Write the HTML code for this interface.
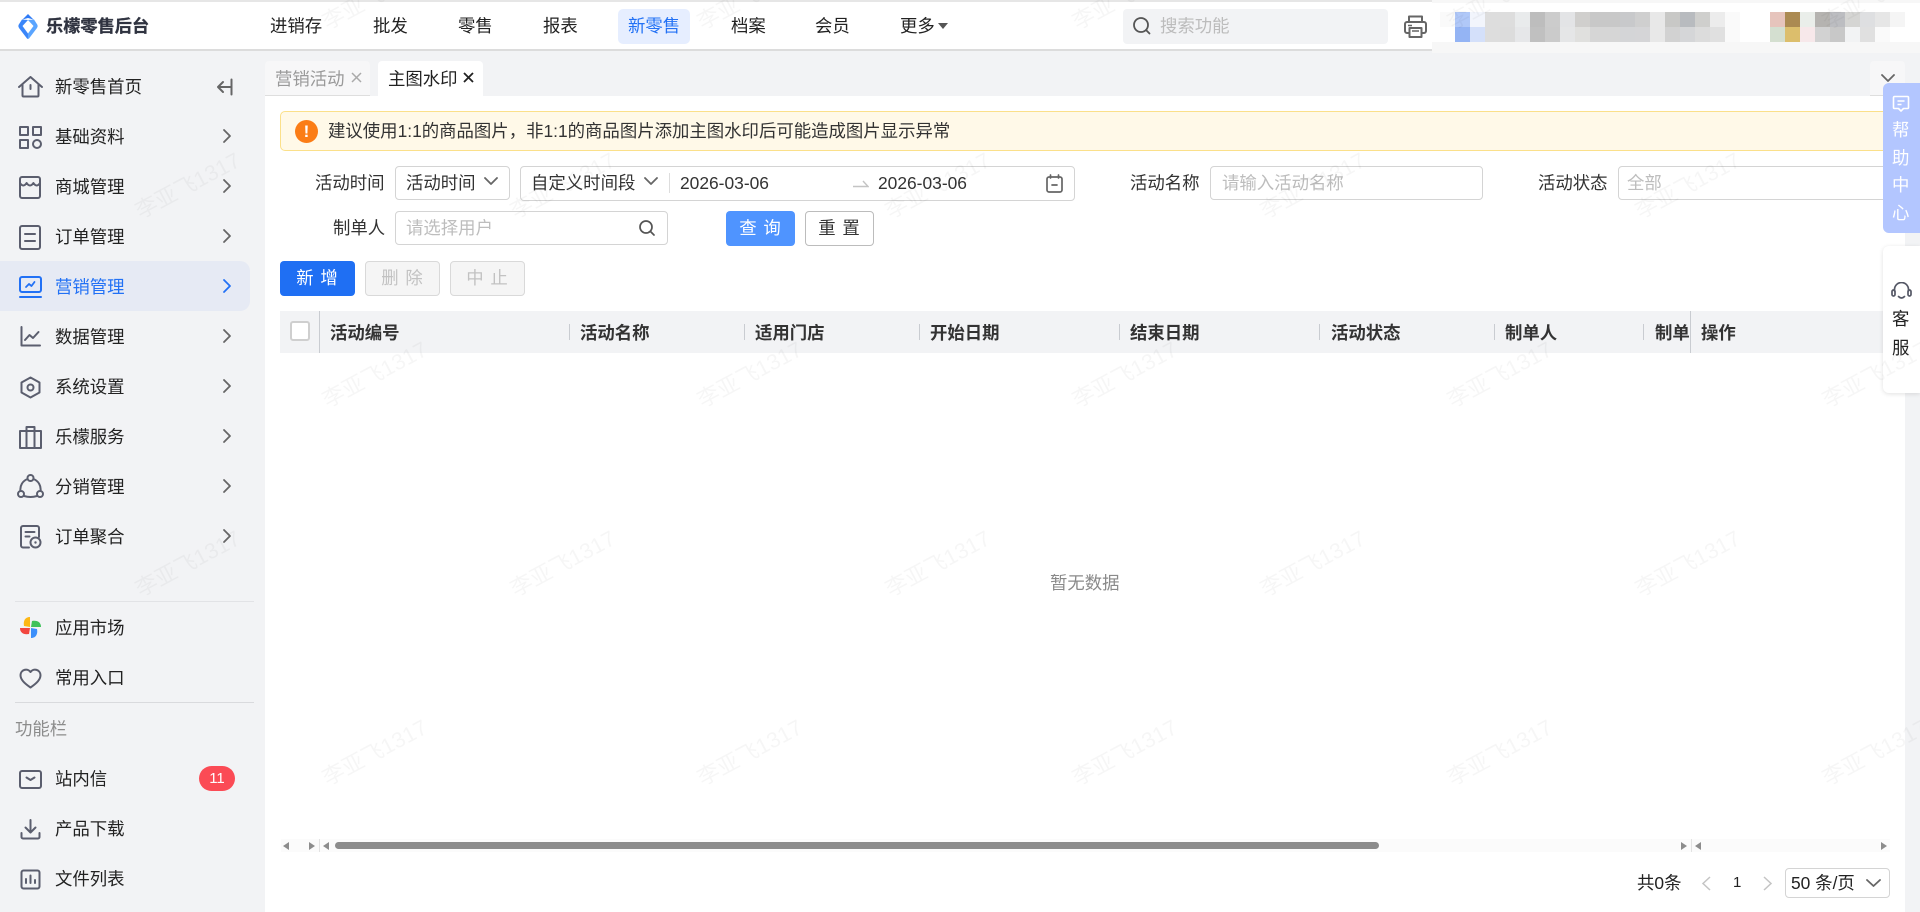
<!DOCTYPE html>
<html lang="zh-CN">
<head>
<meta charset="utf-8">
<title>主图水印</title>
<style>
html,body{margin:0;padding:0}
body{width:1920px;height:912px;position:relative;overflow:hidden;background:#f2f3f5;font-family:"Liberation Sans","Noto Sans CJK SC",sans-serif;font-size:17.4px;color:#222}
div,span,svg{position:absolute;box-sizing:border-box}
.t{line-height:24px;height:24px;white-space:nowrap}
.ph{color:#bdbdbd}
.b{border:1px solid #d4d4d4;border-radius:4px;background:#fff}
.btn{border-radius:4px;text-align:center;line-height:33px;letter-spacing:1px;white-space:nowrap}
.dis{background:#f5f5f5;border:1px solid #d9d9d9;color:#c2c2c2;width:75px;height:35px;top:261px}
.th{font-weight:700;color:#333;top:321px;font-size:17.4px}
.sp{width:1px;height:16px;background:#c9ccd1;top:324px}
.wm{color:rgba(0,0,0,.035);font-size:22px;line-height:30px;white-space:nowrap;transform:translate(-50%,-50%) rotate(-28deg);pointer-events:none}
.ic{fill:none;stroke:#5b5e6e;stroke-width:2;stroke-linecap:round;stroke-linejoin:round}
.ch{fill:none;stroke:#666;stroke-width:1.8;stroke-linecap:round;stroke-linejoin:round}
.px{width:15px;height:15px}
</style>
</head>
<body>

<!-- top bar -->
<div style="left:0;top:0;width:1920px;height:51px;background:#fff;border-top:2px solid #e6e6e6;border-bottom:2px solid #dcdcdc"></div>
<svg style="left:18px;top:13px" width="20" height="27" viewBox="0 0 20 27"><path d="M10 1 L15.500 6.500 L10 5 L4.500 6.500Z" fill="#2f7bf6"/><path d="M4 6.500 L0.500 12 Q0 13.500 1 15 L9 25.500 L10 26 L10 20.500 L4.500 13 L10 7 Z" fill="#3a86f9"/><path d="M16 6.500 L19.500 12 Q20 13.500 19 15 L11 25.500 L10 26 L10 20.500 L15.500 13 L10 7 Z" fill="#5aa5ff"/></svg>
<span class="t" style="left:46px;top:14px;font-weight:700;font-size:17.2px;color:#2f3340;-webkit-text-stroke:.3px #2f3340">乐檬零售后台</span>

<span class="t" style="left:270px;top:14px">进销存</span>
<span class="t" style="left:373px;top:14px">批发</span>
<span class="t" style="left:458px;top:14px">零售</span>
<span class="t" style="left:543px;top:14px">报表</span>
<div style="left:618px;top:9px;width:72px;height:35px;background:#e6eeff;border-radius:5px"></div>
<span class="t" style="left:628px;top:14px;color:#2271f5">新零售</span>
<span class="t" style="left:731px;top:14px">档案</span>
<span class="t" style="left:815px;top:14px">会员</span>
<span class="t" style="left:900px;top:14px">更多</span>
<svg style="left:938px;top:22px" width="11" height="8"><path d="M0 1H10L5 7Z" fill="#555"/></svg>

<div style="left:1123px;top:9px;width:265px;height:35px;background:#f2f3f5;border-radius:4px"></div>
<svg style="left:1132px;top:16px" width="20" height="20" viewBox="0 0 20 20" fill="none" stroke="#555" stroke-width="1.8" stroke-linecap="round"><circle cx="9" cy="9" r="7"/><path d="M14 14l3.500 3.500"/></svg>
<span class="t ph" style="left:1160px;top:14px;color:#bcbcbc">搜索功能</span>
<svg style="left:1403px;top:14px" width="25" height="25" viewBox="0 0 25 25" fill="none" stroke="#666" stroke-width="2" stroke-linejoin="round"><path d="M6 8V2.500h13V8"/><rect x="2" y="8" width="21" height="11" rx="2"/><rect x="6.500" y="14" width="12" height="9" fill="#fff"/><path d="M5 11.500h4M9 17h7" stroke-width="1.500"/></svg>

<!-- blurred account -->
<div style="left:1432px;top:0;width:488px;height:53px;background:#f7f7f7"></div>
<div style="left:1432px;top:3px;width:488px;height:39px;background:#fff"></div>
<div id="pxrow" style="left:0;top:0;width:0;height:0">
<span class="px" style="left:1440px;top:12px;background:#fafafa"></span>
<span class="px" style="left:1455px;top:12px;background:#b0c8f8"></span><span class="px" style="left:1455px;top:27px;background:#94b4f4"></span>
<span class="px" style="left:1470px;top:12px;background:#f2f5fc"></span><span class="px" style="left:1470px;top:27px;background:#d4e0fa"></span>
<span class="px" style="left:1485px;top:12px;background:#ddd"></span><span class="px" style="left:1485px;top:27px;background:#ddd"></span>
<span class="px" style="left:1500px;top:12px;background:#ddd"></span><span class="px" style="left:1500px;top:27px;background:#dcdcdc"></span>
<span class="px" style="left:1515px;top:12px;background:#e9ebec"></span><span class="px" style="left:1515px;top:27px;background:#e6e7e9"></span>
<span class="px" style="left:1530px;top:12px;background:#bdbdbd"></span><span class="px" style="left:1530px;top:27px;background:#c0c0c0"></span>
<span class="px" style="left:1545px;top:12px;background:#ccc"></span><span class="px" style="left:1545px;top:27px;background:#cbcbcb"></span>
<span class="px" style="left:1560px;top:12px;background:#e3e4e6"></span><span class="px" style="left:1560px;top:27px;background:#e5e6e7"></span>
<span class="px" style="left:1575px;top:12px;background:#d0cfcd"></span><span class="px" style="left:1575px;top:27px;background:#e0e0de"></span>
<span class="px" style="left:1590px;top:12px;background:#c8c8c8"></span><span class="px" style="left:1590px;top:27px;background:#d6d6d6"></span>
<span class="px" style="left:1605px;top:12px;background:#c8c8c8"></span><span class="px" style="left:1605px;top:27px;background:#d6d6d6"></span>
<span class="px" style="left:1620px;top:12px;background:#c8c9cb"></span><span class="px" style="left:1620px;top:27px;background:#d4d5d7"></span>
<span class="px" style="left:1635px;top:12px;background:#cfcfcf"></span><span class="px" style="left:1635px;top:27px;background:#d5d5d7"></span>
<span class="px" style="left:1650px;top:12px;background:#e8e8e8"></span><span class="px" style="left:1650px;top:27px;background:#e8e8e8"></span>
<span class="px" style="left:1665px;top:12px;background:#c8c8c6"></span><span class="px" style="left:1665px;top:27px;background:#d2d2d2"></span>
<span class="px" style="left:1680px;top:12px;background:#b8bbbf"></span><span class="px" style="left:1680px;top:27px;background:#d5d6d8"></span>
<span class="px" style="left:1695px;top:12px;background:#cfcfcd"></span><span class="px" style="left:1695px;top:27px;background:#dcdcdc"></span>
<span class="px" style="left:1710px;top:12px;background:#ececec"></span><span class="px" style="left:1710px;top:27px;background:#e0e0e0"></span>
<span class="px" style="left:1725px;top:12px;background:#fafafa"></span><span class="px" style="left:1725px;top:27px;background:#fafafa"></span>
<span class="px" style="left:1770px;top:12px;background:#e6c4bc"></span><span class="px" style="left:1770px;top:27px;background:#d4dfd0"></span>
<span class="px" style="left:1785px;top:12px;background:#ab8a52"></span><span class="px" style="left:1785px;top:27px;background:#dcbe6c"></span>
<span class="px" style="left:1800px;top:12px;background:#eaeeea"></span><span class="px" style="left:1800px;top:27px;background:#f7e8ea"></span>
<span class="px" style="left:1815px;top:12px;background:#b5b3b0"></span><span class="px" style="left:1815px;top:27px;background:#d2d2d2"></span>
<span class="px" style="left:1830px;top:12px;background:#bcbdc1"></span><span class="px" style="left:1830px;top:27px;background:#c8c8c8"></span>
<span class="px" style="left:1845px;top:12px;background:#d5d5d3"></span><span class="px" style="left:1845px;top:27px;background:#f2f3f4"></span>
<span class="px" style="left:1860px;top:12px;background:#dedfe1"></span><span class="px" style="left:1860px;top:27px;background:#e0e0e0"></span>
<span class="px" style="left:1875px;top:12px;background:#e6e6e6"></span><span class="px" style="left:1875px;top:27px;background:#fafafa"></span>
<span class="px" style="left:1890px;top:12px;background:#f5f5f5"></span>
</div>

<!-- sidebar -->
<div style="left:0;top:261px;width:250px;height:50px;background:#e6eaf4;border-radius:0 10px 10px 0"></div>

<svg class="ic" style="left:18px;top:76px" width="25" height="22" viewBox="0 0 25 22"><path d="M1 11 L12.500 1 L24 11M4.500 8.500V19.500a1 1 0 0 0 1 1H19.500a1 1 0 0 0 1-1V8.500M12.500 9v4"/></svg>
<svg class="ic" style="left:19px;top:126px" width="23" height="23" viewBox="0 0 23 23"><rect x="1" y="1" width="8" height="8"/><rect x="14" y="1" width="8" height="8"/><rect x="1" y="14" width="8" height="8"/><circle cx="18" cy="18" r="4"/></svg>
<svg class="ic" style="left:19px;top:176px" width="22" height="23" viewBox="0 0 22 23"><rect x="1" y="1" width="20" height="21" rx="2"/><path d="M1 7 q3.300 5 6.600 0 q3.400 5 6.800 0 q3.300 5 6.600 0"/></svg>
<svg class="ic" style="left:19px;top:225px" width="22" height="25" viewBox="0 0 22 25"><rect x="1" y="1" width="20" height="23" rx="2"/><path d="M6 9h10M6 16h10"/></svg>
<svg style="left:19px;top:275px" width="23" height="24" viewBox="0 0 23 24" fill="none" stroke="#2271f5" stroke-width="2" stroke-linejoin="round" stroke-linecap="round"><rect x="1" y="2" width="21" height="15" rx="2"/><path d="M1 22h21"/><path d="M7 12l3-3 2.500 2 3-4" stroke-width="1.800"/></svg>
<svg class="ic" style="left:20px;top:326px" width="21" height="21" viewBox="0 0 21 21"><path d="M1.500 1V19.500H20M5 14l4.500-5 3.500 3 5.500-6"/></svg>
<svg class="ic" style="left:20px;top:376px" width="21" height="23" viewBox="0 0 21 23"><path d="M10.500 1.500L19.500 6.500V16.500L10.500 21.500L1.500 16.500V6.500Z"/><circle cx="10.500" cy="11.500" r="3"/></svg>
<svg class="ic" style="left:18px;top:425px" width="25" height="24" viewBox="0 0 25 24"><rect x="2" y="6" width="21" height="17"/><path d="M8.500 6V2h8v4M8.500 6v17M16.500 6v17"/></svg>
<svg class="ic" style="left:17px;top:474px" width="27" height="25" viewBox="0 0 27 25"><circle cx="13.500" cy="4" r="3"/><circle cx="4" cy="20" r="3"/><circle cx="23" cy="20" r="3"/><path d="M10.500 5A11 11 0 0 0 3.500 17M16.500 5A11 11 0 0 1 23.500 17M7 22q6.500 2 13 0"/></svg>
<svg class="ic" style="left:20px;top:525px" width="22" height="24" viewBox="0 0 22 24"><path d="M9 22.500H3a2 2 0 0 1-2-2V3a2 2 0 0 1 2-2H17a2 2 0 0 1 2 2V12M5.500 7h9M5.500 11.500h4"/><circle cx="15.500" cy="17.500" r="5"/><circle cx="15.500" cy="17.500" r="1.200" fill="#5b5e6e" stroke="none"/></svg>

<span class="t" style="left:55px;top:75px">新零售首页</span>
<span class="t" style="left:55px;top:125px">基础资料</span>
<span class="t" style="left:55px;top:175px">商城管理</span>
<span class="t" style="left:55px;top:225px">订单管理</span>
<span class="t" style="left:55px;top:275px;color:#2271f5">营销管理</span>
<span class="t" style="left:55px;top:325px">数据管理</span>
<span class="t" style="left:55px;top:375px">系统设置</span>
<span class="t" style="left:55px;top:425px">乐檬服务</span>
<span class="t" style="left:55px;top:475px">分销管理</span>
<span class="t" style="left:55px;top:525px">订单聚合</span>

<svg class="ch" style="left:216px;top:78px" width="17" height="18" viewBox="0 0 17 18"><path d="M15.500 1.500v15M15 9H2M7 4L2 9l5 5" stroke-width="2"/></svg>
<svg class="ch" style="left:222px;top:128px" width="10" height="16" viewBox="0 0 10 16"><path d="M2 2l6 6-6 6"/></svg>
<svg class="ch" style="left:222px;top:178px" width="10" height="16" viewBox="0 0 10 16"><path d="M2 2l6 6-6 6"/></svg>
<svg class="ch" style="left:222px;top:228px" width="10" height="16" viewBox="0 0 10 16"><path d="M2 2l6 6-6 6"/></svg>
<svg class="ch" style="left:222px;top:278px;stroke:#2271f5" width="10" height="16" viewBox="0 0 10 16"><path d="M2 2l6 6-6 6"/></svg>
<svg class="ch" style="left:222px;top:328px" width="10" height="16" viewBox="0 0 10 16"><path d="M2 2l6 6-6 6"/></svg>
<svg class="ch" style="left:222px;top:378px" width="10" height="16" viewBox="0 0 10 16"><path d="M2 2l6 6-6 6"/></svg>
<svg class="ch" style="left:222px;top:428px" width="10" height="16" viewBox="0 0 10 16"><path d="M2 2l6 6-6 6"/></svg>
<svg class="ch" style="left:222px;top:478px" width="10" height="16" viewBox="0 0 10 16"><path d="M2 2l6 6-6 6"/></svg>
<svg class="ch" style="left:222px;top:528px" width="10" height="16" viewBox="0 0 10 16"><path d="M2 2l6 6-6 6"/></svg>

<div style="left:15px;top:601px;width:239px;height:1px;background:#e2e3e6"></div>
<svg style="left:19px;top:616px" width="23" height="23" viewBox="0 0 23 23"><path d="M11 11V1C6 1 4 5 5 10Z" fill="#fdb714"/><path d="M12 11H22C22 6 18 4 13 5Z" fill="#3fc25b"/><path d="M12 12V22C17 22 19 18 18 13Z" fill="#3c8ffa"/><path d="M11 12H1C1 17 5 19 10 18Z" fill="#f2463f"/></svg>
<span class="t" style="left:55px;top:616px">应用市场</span>
<svg class="ic" style="left:19px;top:668px" width="23" height="21" viewBox="0 0 23 21"><path d="M11.500 19.500C5 15 1.500 11.500 1.500 7A5.500 5.500 0 0 1 11.500 4 5.500 5.500 0 0 1 21.500 7C21.500 11.500 18 15 11.500 19.500Z"/></svg>
<span class="t" style="left:55px;top:666px">常用入口</span>
<div style="left:15px;top:702px;width:239px;height:1px;background:#d9dadd"></div>
<span class="t" style="left:15px;top:717px;color:#8c8c8c">功能栏</span>
<svg class="ic" style="left:19px;top:770px" width="23" height="19" viewBox="0 0 23 19"><rect x="1" y="1" width="21" height="17" rx="2"/><path d="M7.500 7.500l4 2.500 4-2.500"/></svg>
<span class="t" style="left:55px;top:767px">站内信</span>
<div style="left:199px;top:766px;width:36px;height:25px;border-radius:13px;background:#fb4b55;color:#fff;text-align:center;line-height:25px;font-size:15px">11</div>
<svg class="ic" style="left:20px;top:819px" width="21" height="21" viewBox="0 0 21 21"><path d="M10.500 1v12M5.500 8.500l5 5 5-5M1.500 14v4a1.500 1.500 0 0 0 1.500 1.500h15a1.500 1.500 0 0 0 1.500-1.500v-4"/></svg>
<span class="t" style="left:55px;top:817px">产品下载</span>
<svg class="ic" style="left:20px;top:869px" width="21" height="21" viewBox="0 0 21 21"><rect x="1.500" y="1.500" width="18" height="18" rx="2"/><path d="M6 14v-4M10.500 14V6.500M15 14v-3"/></svg>
<span class="t" style="left:55px;top:867px">文件列表</span>

<!-- tabs -->
<div style="left:265px;top:61px;width:105px;height:35px;background:#f7f7f8;border-bottom:1px solid #dedede;border-radius:4px 4px 0 0"></div>
<span class="t" style="left:275px;top:67px;color:#9a9a9a">营销活动</span>
<svg style="left:351px;top:72px" width="11" height="11" viewBox="0 0 11 11"><path d="M1 1l9 9M10 1l-9 9" stroke="#aaa" stroke-width="1.500"/></svg>
<div style="left:378px;top:61px;width:105px;height:36px;background:#fff;border-radius:4px 4px 0 0"></div>
<span class="t" style="left:388px;top:67px;color:#222">主图水印</span>
<svg style="left:463px;top:72px" width="11" height="11" viewBox="0 0 11 11"><path d="M1 1l9 9M10 1l-9 9" stroke="#222" stroke-width="1.800"/></svg>
<div style="left:1870px;top:61px;width:35px;height:35px;background:#f7f7f8;border-bottom:1px solid #dedede;border-radius:4px 4px 0 0"></div>
<svg class="ch" style="left:1881px;top:74px" width="14" height="9" viewBox="0 0 14 9"><path d="M1 1l6 6 6-6"/></svg>

<!-- content -->
<div style="left:265px;top:96px;width:1640px;height:816px;background:#fff"></div>

<!-- alert -->
<div style="left:280px;top:111px;width:1610px;height:40px;background:#fff9e8;border:1px solid #fbe08a;border-radius:5px"></div>
<div style="left:295px;top:120px;width:23px;height:23px;background:#fb7d16;border-radius:50%;color:#fff;text-align:center;line-height:23px;font-weight:700;font-size:17px">!</div>
<span class="t" style="left:328px;top:119px;color:#333">建议使用1:1的商品图片，非1:1的商品图片添加主图水印后可能造成图片显示异常</span>

<!-- filters row 1 -->
<span class="t" style="left:315px;top:171px;color:#333">活动时间</span>
<div class="b" style="left:395px;top:166px;width:115px;height:34px"></div>
<span class="t" style="left:406px;top:171px;color:#333">活动时间</span>
<svg class="ch" style="left:484px;top:177px" width="14" height="9" viewBox="0 0 14 9"><path d="M1 1l6 6 6-6"/></svg>

<div class="b" style="left:520px;top:166px;width:555px;height:35px"></div>
<span class="t" style="left:531px;top:171px;color:#333">自定义时间段</span>
<svg class="ch" style="left:644px;top:177px" width="14" height="9" viewBox="0 0 14 9"><path d="M1 1l6 6 6-6"/></svg>
<div style="left:669px;top:173px;width:1px;height:20px;background:#ddd"></div>
<span class="t" style="left:680px;top:171px;color:#333">2026-03-06</span>
<svg style="left:853px;top:178px" width="16" height="10" viewBox="0 0 16 10" fill="none" stroke="#c4c4c4" stroke-width="1.400"><path d="M0 8.500H15L10 3"/></svg>
<span class="t" style="left:878px;top:171px;color:#333">2026-03-06</span>
<svg style="left:1046px;top:174px" width="17" height="19" viewBox="0 0 17 19" fill="none" stroke="#666" stroke-width="1.700" stroke-linecap="round"><rect x="1" y="3" width="15" height="15" rx="2"/><path d="M4.500 1v3M12.500 1v3M6 11h5"/></svg>

<span class="t" style="left:1130px;top:171px;color:#333">活动名称</span>
<div class="b" style="left:1210px;top:166px;width:273px;height:34px"></div>
<span class="t ph" style="left:1222px;top:171px">请输入活动名称</span>
<span class="t" style="left:1538px;top:171px;color:#333">活动状态</span>
<div class="b" style="left:1618px;top:166px;width:280px;height:34px"></div>
<span class="t ph" style="left:1627px;top:171px">全部</span>

<!-- filters row 2 -->
<span class="t" style="left:333px;top:216px;color:#333">制单人</span>
<div class="b" style="left:395px;top:211px;width:273px;height:34px"></div>
<span class="t ph" style="left:406px;top:216px">请选择用户</span>
<svg style="left:638px;top:219px" width="18" height="18" viewBox="0 0 18 18" fill="none" stroke="#555" stroke-width="1.700" stroke-linecap="round"><circle cx="8" cy="8" r="6"/><path d="M12.500 12.500l3.500 3.500"/></svg>
<div class="btn" style="left:726px;top:211px;width:69px;height:35px;background:#4f94ff;color:#fff;line-height:35px;font-size:17.4px">查 询</div>
<div class="btn" style="left:805px;top:211px;width:69px;height:35px;background:#fff;border:1px solid #bcbcbc;color:#333;font-size:17.4px">重 置</div>

<!-- actions -->
<div class="btn" style="left:280px;top:261px;width:75px;height:35px;background:#1f6ff3;color:#fff;line-height:35px">新 增</div>
<div class="btn dis" style="left:365px">删 除</div>
<div class="btn dis" style="left:450px">中 止</div>

<!-- table header -->
<div style="left:280px;top:311px;width:1625px;height:42px;background:#f2f3f5"></div>
<div style="left:290px;top:321px;width:20px;height:20px;background:#fff;border:2px solid #cfcfcf;border-radius:3px"></div>
<div style="left:319px;top:311px;width:1px;height:42px;background:#c9ccd1"></div>
<span class="t th" style="left:330px">活动编号</span><div class="sp" style="left:569px"></div>
<span class="t th" style="left:580px">活动名称</span><div class="sp" style="left:744px"></div>
<span class="t th" style="left:755px">适用门店</span><div class="sp" style="left:919px"></div>
<span class="t th" style="left:930px">开始日期</span><div class="sp" style="left:1119px"></div>
<span class="t th" style="left:1130px">结束日期</span><div class="sp" style="left:1319px"></div>
<span class="t th" style="left:1331px">活动状态</span><div class="sp" style="left:1494px"></div>
<span class="t th" style="left:1505px">制单人</span><div class="sp" style="left:1643px"></div>
<span class="t th" style="left:1655px;width:35px;overflow:hidden">制单时间</span>
<div style="left:1690px;top:311px;width:1px;height:42px;background:#c9ccd1"></div>
<span class="t th" style="left:1701px">操作</span>

<span class="t" style="left:1050px;top:571px;color:#8a8a8a">暂无数据</span>

<!-- scrollbars -->
<div style="left:281px;top:839px;width:1609px;height:13px;background:#fbfbfb"></div>
<svg style="left:283px;top:842px" width="7" height="8"><path d="M6 0V8L0 4Z" fill="#8c8c8c"/></svg>
<svg style="left:309px;top:842px" width="7" height="8"><path d="M0 0V8L6 4Z" fill="#8c8c8c"/></svg>
<div style="left:319px;top:839px;width:1px;height:13px;background:#e2e2e2"></div>
<svg style="left:323px;top:842px" width="7" height="8"><path d="M6 0V8L0 4Z" fill="#8c8c8c"/></svg>
<div style="left:335px;top:842px;width:1044px;height:7px;background:#8c8c8c;border-radius:4px"></div>
<svg style="left:1681px;top:842px" width="7" height="8"><path d="M0 0V8L6 4Z" fill="#8c8c8c"/></svg>
<div style="left:1691px;top:839px;width:1px;height:13px;background:#e2e2e2"></div>
<svg style="left:1695px;top:842px" width="7" height="8"><path d="M6 0V8L0 4Z" fill="#8c8c8c"/></svg>
<svg style="left:1881px;top:842px" width="7" height="8"><path d="M0 0V8L6 4Z" fill="#8c8c8c"/></svg>

<!-- pagination -->
<span class="t" style="left:1637px;top:871px">共0条</span>
<svg style="left:1701px;top:876px" width="11" height="15" viewBox="0 0 11 15" fill="none" stroke="#c4c4c4" stroke-width="1.500"><path d="M9 1L2 7.500 9 14"/></svg>
<span class="t" style="left:1733px;top:871px;font-size:15px">1</span>
<svg style="left:1762px;top:876px" width="11" height="15" viewBox="0 0 11 15" fill="none" stroke="#c4c4c4" stroke-width="1.500"><path d="M2 1L9 7.500 2 14"/></svg>
<div class="b" style="left:1785px;top:868px;width:105px;height:30px"></div>
<span class="t" style="left:1791px;top:871px">50 条/页</span>
<svg class="ch" style="left:1866px;top:879px" width="15" height="9" viewBox="0 0 15 9"><path d="M1 1l6.500 6 6.500-6"/></svg>

<!-- help panel -->
<div style="left:1883px;top:83px;width:37px;height:150px;background:#b3c6ff;border-radius:6px 0 0 6px"></div>
<svg style="left:1892px;top:95px" width="18" height="18" viewBox="0 0 18 18" fill="none" stroke="#fff" stroke-width="1.600" stroke-linejoin="round"><path d="M2.500 1.500H15.500a1 1 0 0 1 1 1V12.500a1 1 0 0 1-1 1H11.500L9 16 6.500 13.500H2.500a1 1 0 0 1-1-1V2.500a1 1 0 0 1 1-1Z"/><path d="M5.500 6h7M5.500 9.500h4"/></svg>
<span class="t" style="left:1892px;top:118px;color:#fff">帮</span>
<span class="t" style="left:1892px;top:146px;color:#fff">助</span>
<span class="t" style="left:1892px;top:173px;color:#fff">中</span>
<span class="t" style="left:1892px;top:201px;color:#fff">心</span>

<!-- customer service -->
<div style="left:1883px;top:246px;width:37px;height:147px;background:#fff;border-radius:6px 0 0 6px;box-shadow:0 1px 5px rgba(0,0,0,.12)"></div>
<svg style="left:1891px;top:282px" width="21" height="21" viewBox="0 0 21 21" fill="none" stroke="#555866" stroke-width="1.700" stroke-linecap="round"><path d="M3.500 9V7.500a7 7 0 0 1 14 0V9"/><rect x="1" y="8" width="3" height="6" rx="1.500"/><rect x="17" y="8" width="3" height="6" rx="1.500"/><path d="M7.500 14.500q3 3 6 0"/></svg>
<span class="t" style="left:1892px;top:307px">客</span>
<span class="t" style="left:1892px;top:336px">服</span>

<!-- watermark -->
<div style="left:0;top:0;width:1920px;height:912px;overflow:hidden;pointer-events:none">
<span class="wm" style="left:375px;top:-3px">李亚飞1317</span><span class="wm" style="left:750px;top:-3px">李亚飞1317</span><span class="wm" style="left:1125px;top:-3px">李亚飞1317</span><span class="wm" style="left:1500px;top:-3px">李亚飞1317</span><span class="wm" style="left:1875px;top:-3px">李亚飞1317</span>
<span class="wm" style="left:188px;top:186px">李亚飞1317</span><span class="wm" style="left:563px;top:186px">李亚飞1317</span><span class="wm" style="left:938px;top:186px">李亚飞1317</span><span class="wm" style="left:1313px;top:186px">李亚飞1317</span><span class="wm" style="left:1688px;top:186px">李亚飞1317</span>
<span class="wm" style="left:375px;top:375px">李亚飞1317</span><span class="wm" style="left:750px;top:375px">李亚飞1317</span><span class="wm" style="left:1125px;top:375px">李亚飞1317</span><span class="wm" style="left:1500px;top:375px">李亚飞1317</span><span class="wm" style="left:1875px;top:375px">李亚飞1317</span>
<span class="wm" style="left:188px;top:564px">李亚飞1317</span><span class="wm" style="left:563px;top:564px">李亚飞1317</span><span class="wm" style="left:938px;top:564px">李亚飞1317</span><span class="wm" style="left:1313px;top:564px">李亚飞1317</span><span class="wm" style="left:1688px;top:564px">李亚飞1317</span>
<span class="wm" style="left:375px;top:753px">李亚飞1317</span><span class="wm" style="left:750px;top:753px">李亚飞1317</span><span class="wm" style="left:1125px;top:753px">李亚飞1317</span><span class="wm" style="left:1500px;top:753px">李亚飞1317</span><span class="wm" style="left:1875px;top:753px">李亚飞1317</span>
</div>
</body>
</html>
